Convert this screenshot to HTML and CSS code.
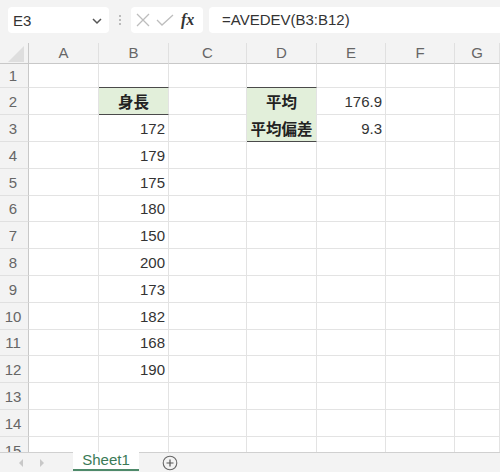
FILE: index.html
```html
<!DOCTYPE html>
<html lang="ja">
<head>
<meta charset="utf-8">
<link rel="stylesheet" href="styles.css">
</head>
<body>
<div class="app">
  <div class="toolbar">
    <div class="namebox">
      <span class="name">E3</span>
      <svg class="chev" width="12" height="8" viewBox="0 0 12 8"><path d="M2 2 L6 6 L10 2" fill="none" stroke="#555" stroke-width="1.5"/></svg>
    </div>
    <div class="dots"><span></span><span></span><span></span></div>
    <div class="fxbox">
      <svg width="16" height="16" viewBox="0 0 16 16"><path d="M2 2 L14 14 M14 2 L2 14" stroke="#bdbdbd" stroke-width="1.3" fill="none"/></svg>
      <svg width="18" height="16" viewBox="0 0 18 16"><path d="M1 8 L6 13 L17 3" stroke="#bdbdbd" stroke-width="1.3" fill="none"/></svg>
      <span class="fx">fx</span>
    </div>
    <div class="formula">=AVEDEV(B3:B12)</div>
  </div>
  <div class="sheet">
    <div class="grid">
      <div class="corner"><svg width="26" height="20" viewBox="0 0 26 20"><path d="M24 3 L24 19 L8 19 Z" fill="#dedede"/></svg></div>
      <div class="ch">A</div><div class="ch">B</div><div class="ch">C</div><div class="ch">D</div><div class="ch">E</div><div class="ch">F</div><div class="ch">G</div>

      <div class="rh">1</div><div class="c"></div><div class="c bb-dark"></div><div class="c"></div><div class="c bb-dark"></div><div class="c"></div><div class="c"></div><div class="c"></div>
      <div class="rh">2</div><div class="c"></div><div class="c hd bb-dark">身長</div><div class="c"></div><div class="c hd bb-green">平均</div><div class="c num">176.9</div><div class="c"></div><div class="c"></div>
      <div class="rh">3</div><div class="c"></div><div class="c num">172</div><div class="c"></div><div class="c hd bb-dark">平均偏差</div><div class="c num">9.3</div><div class="c"></div><div class="c"></div>
      <div class="rh">4</div><div class="c"></div><div class="c num">179</div><div class="c"></div><div class="c"></div><div class="c"></div><div class="c"></div><div class="c"></div>
      <div class="rh">5</div><div class="c"></div><div class="c num">175</div><div class="c"></div><div class="c"></div><div class="c"></div><div class="c"></div><div class="c"></div>
      <div class="rh">6</div><div class="c"></div><div class="c num">180</div><div class="c"></div><div class="c"></div><div class="c"></div><div class="c"></div><div class="c"></div>
      <div class="rh">7</div><div class="c"></div><div class="c num">150</div><div class="c"></div><div class="c"></div><div class="c"></div><div class="c"></div><div class="c"></div>
      <div class="rh">8</div><div class="c"></div><div class="c num">200</div><div class="c"></div><div class="c"></div><div class="c"></div><div class="c"></div><div class="c"></div>
      <div class="rh">9</div><div class="c"></div><div class="c num">173</div><div class="c"></div><div class="c"></div><div class="c"></div><div class="c"></div><div class="c"></div>
      <div class="rh">10</div><div class="c"></div><div class="c num">182</div><div class="c"></div><div class="c"></div><div class="c"></div><div class="c"></div><div class="c"></div>
      <div class="rh">11</div><div class="c"></div><div class="c num">168</div><div class="c"></div><div class="c"></div><div class="c"></div><div class="c"></div><div class="c"></div>
      <div class="rh">12</div><div class="c"></div><div class="c num">190</div><div class="c"></div><div class="c"></div><div class="c"></div><div class="c"></div><div class="c"></div>
      <div class="rh">13</div><div class="c"></div><div class="c"></div><div class="c"></div><div class="c"></div><div class="c"></div><div class="c"></div><div class="c"></div>
      <div class="rh">14</div><div class="c"></div><div class="c"></div><div class="c"></div><div class="c"></div><div class="c"></div><div class="c"></div><div class="c"></div>
      <div class="rh">15</div><div class="c"></div><div class="c"></div><div class="c"></div><div class="c"></div><div class="c"></div><div class="c"></div><div class="c"></div>
    </div>
  </div>
  <div class="tabbar">
    <div class="arrows">
      <svg width="8" height="10" viewBox="0 0 8 10"><path d="M6 1 L2 5 L6 9 Z" fill="#c8c8c8"/></svg>
      <svg width="8" height="10" viewBox="0 0 8 10"><path d="M2 1 L6 5 L2 9 Z" fill="#c8c8c8"/></svg>
    </div>
    <div class="tab">Sheet1</div>
    <svg class="plus" width="16" height="16" viewBox="0 0 16 16"><circle cx="8" cy="8" r="6.8" fill="none" stroke="#666" stroke-width="1.1"/><path d="M8 4.5 V11.5 M4.5 8 H11.5" stroke="#555" stroke-width="1.2"/></svg>
  </div>
</div>
</body>
</html>
```
FILE: styles.css
```css
* { box-sizing: border-box; }
html, body { margin: 0; padding: 0; }
body {
  width: 500px;
  height: 472px;
  overflow: hidden;
  background: #f3f3f3;
  font-family: "Liberation Sans", "Noto Sans CJK JP", sans-serif;
  color: #333;
}
.app { width: 500px; height: 472px; display: flex; flex-direction: column; }
.toolbar {
  height: 43px;
  display: flex;
  align-items: flex-start;
  padding: 7px 0 0 8px;
  background: #f3f3f3;
}
.namebox {
  width: 101px;
  height: 26px;
  background: #fff;
  border-radius: 4px;
  display: flex;
  align-items: center;
  justify-content: space-between;
  padding: 0 6px 0 5px;
}
.name { font-size: 15px; color: #333; }
.chev { margin-top: 1px; }
.dots {
  width: 22px;
  height: 26px;
  display: flex;
  flex-direction: column;
  align-items: center;
  justify-content: center;
  gap: 2px;
}
.dots span { width: 2px; height: 2px; background: #a8a8a8; border-radius: 1px; }
.fxbox {
  width: 72px;
  height: 26px;
  background: #fff;
  border-radius: 4px;
  display: flex;
  align-items: center;
  padding: 0 0 0 4px;
  gap: 5px;
}
.fx {
  font-family: "Liberation Serif", serif;
  font-style: italic;
  font-weight: bold;
  font-size: 16px;
  color: #333;
  margin-left: 2px;
}
.formula {
  margin-left: 6px;
  flex: 1;
  height: 26px;
  background: #fff;
  border-radius: 4px 0 0 4px;
  font-size: 15px;
  line-height: 26px;
  padding-left: 13px;
  color: #333;
}
.sheet { height: 409px; overflow: hidden; background: #fff; }
.grid {
  display: grid;
  grid-template-columns: 29px 70px 70px 78px 70px 69px 69px 1fr;
  grid-template-rows: 21px 24px 27px 27px 27px 27px 26px 27px 27px 27px 27px 26px 27px 27px 27px 27px;
}
.corner {
  background: #f3f3f3;
  border-right: 1px solid #c8c8c8;
  border-bottom: 1px solid #c8c8c8;
  display: flex;
  align-items: flex-end;
}
.ch {
  background: #f3f3f3;
  border-bottom: 1px solid #c8c8c8;
  border-right: 1px solid #e0e0e0;
  font-size: 15px;
  color: #666;
  text-align: center;
  line-height: 20px;
}
.rh {
  background: #f3f3f3;
  border-right: 1px solid #c8c8c8;
  border-bottom: 1px solid #e0e0e0;
  font-size: 15px;
  color: #666;
  text-align: center;
  display: flex;
  align-items: center;
  justify-content: center;
  padding-right: 2px;
}
.c {
  border-right: 1px solid #e3e3e3;
  border-bottom: 1px solid #e3e3e3;
  font-size: 15px;
  color: #333;
  display: flex;
  align-items: center;
}
.num { justify-content: flex-end; padding-right: 3px; }
.hd {
  background: #e2efda;
  justify-content: center;
  font-weight: bold;
  font-family: "Noto Sans CJK JP", sans-serif;
  font-size: 15.5px;
  color: #222;
}
.bb-dark { border-bottom-color: #4a4a4a; }
.bb-green { border-bottom-color: #e2efda; }
.tabbar {
  height: 20px;
  border-top: 1px solid #d0d0d0;
  background: #f3f3f3;
  display: flex;
  align-items: flex-start;
}
.arrows {
  width: 73px;
  display: flex;
  gap: 13px;
  padding: 5px 0 0 17px;
}
.tab {
  width: 66px;
  height: 19px;
  background: #fff;
  border-bottom: 2px solid #4e8a6a;
  color: #3a7a57;
  font-size: 15px;
  text-align: center;
  line-height: 16px;
  margin-top: -1px;
}
.plus { margin: 2px 0 0 23px; }
```
